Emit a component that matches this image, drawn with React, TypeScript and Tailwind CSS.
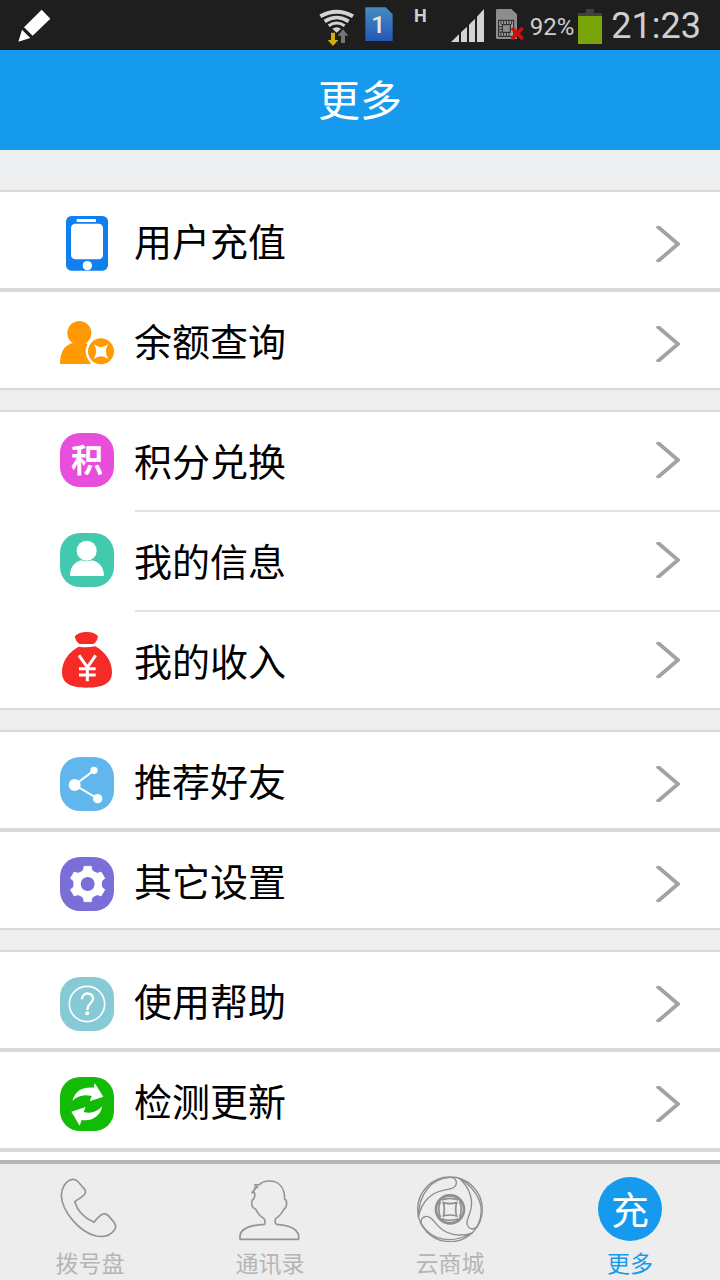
import React from 'react';

const chevron = (
  <svg viewBox="0 0 24 36" className="w-6 h-9 shrink-0" fill="none" aria-hidden="true">
    <path d="M1 0 L22 18 L1 36" stroke="#a3a3a3" strokeWidth="3.8" />
  </svg>
);

const iconClass = "w-[54px] h-[54px] shrink-0 overflow-visible";

function PhoneIcon() {
  return (
    <svg viewBox="60 111 162 162" className={iconClass} aria-hidden="true">
      <rect x="78" y="108" width="126" height="164" rx="16" fill="#0f80ee" />
      <rect x="93" y="131" width="96" height="107" rx="13" fill="#fff" />
      <rect x="110" y="117" width="58" height="9" rx="2" fill="#fff" />
      <circle cx="142" cy="257" r="14" fill="#fff" />
    </svg>
  );
}

function BalanceIcon() {
  return (
    <svg viewBox="60 411 162 162" className={iconClass} aria-hidden="true">
      <circle cx="118" cy="459" r="36" fill="#ff9a04" />
      <path d="M60 552 C60 515 74 495 98 489 Q118 498 138 490 L150 498 L152 552 Z" fill="#ff9a04" />
      <circle cx="183" cy="514" r="46" fill="#fff" />
      <circle cx="183" cy="514" r="39" fill="#ff9a04" />
      <path d="M161 492 Q183 511 205 492 Q190 514 205 537 Q183 520 161 537 Q176 514 161 492 Z" fill="#fff" />
    </svg>
  );
}

function PointsIcon() {
  return (
    <span className="w-[54px] h-[54px] shrink-0 rounded-[20px] bg-[#e84edb] text-white text-[32px] leading-none font-bold flex items-center justify-center pb-1">
      积
    </span>
  );
}

function ProfileIcon() {
  return (
    <svg viewBox="60 399 162 162" className={iconClass} aria-hidden="true">
      <rect x="60" y="399" width="162" height="162" rx="60" fill="#43c9ae" />
      <circle cx="140" cy="452" r="30" fill="#fff" />
      <path d="M90 528 C90 500 105 486 124 481 Q140 487 156 481 C176 486 192 500 192 528 Z" fill="#fff" />
    </svg>
  );
}

function IncomeIcon() {
  return (
    <svg viewBox="60 699 162 162" className={iconClass} aria-hidden="true">
      <path d="M104 709 C112 700 124 696 140 696 C156 696 168 700 174 709 C172 722 166 729 160 732 L118 732 C112 728 107 722 104 709 Z" fill="#f52b27" />
      <path d="M116 740 Q140 744 166 739 C196 756 216 784 216 816 C216 850 190 863 140 863 C92 863 66 850 66 816 C66 784 86 756 116 740 Z" fill="#f52b27" />
      <path d="M117 766 L142 802 L167 766 M142 800 V844 M117 806 H167 M117 825 H167" fill="none" stroke="#fff" strokeWidth="9" />
    </svg>
  );
}

function ShareIcon() {
  return (
    <svg viewBox="60 111 162 162" className={iconClass} aria-hidden="true">
      <rect x="60" y="111" width="162" height="162" rx="60" fill="#62b6ee" />
      <path d="M162 151 L104 195 L173 236" fill="none" stroke="#fff" strokeWidth="6" />
      <circle cx="162" cy="151" r="11" fill="#fff" />
      <circle cx="104" cy="195" r="18" fill="#fff" />
      <circle cx="173" cy="236" r="14" fill="#fff" />
    </svg>
  );
}

function SettingsIcon() {
  const teeth = [0, 60, 120, 180, 240, 300];
  return (
    <svg viewBox="60 411 162 162" className={iconClass} aria-hidden="true">
      <rect x="60" y="411" width="162" height="162" rx="60" fill="#7a6fd8" />
      <circle cx="143" cy="492" r="42" fill="#fff" />
      {teeth.map((angle) => (
        <path key={angle} d="M122 458 L130 450 L132 439 H154 L156 450 L164 458 Z" fill="#fff" stroke="#fff" strokeWidth="2" transform={`rotate(${angle} 143 492)`} />
      ))}
      <circle cx="143" cy="492" r="21" fill="#7a6fd8" />
    </svg>
  );
}

function HelpIcon() {
  return (
    <svg viewBox="60 111 162 162" className={iconClass} aria-hidden="true">
      <rect x="60" y="111" width="162" height="162" rx="60" fill="#86cad6" />
      <circle cx="141" cy="192" r="53" fill="none" stroke="#fff" strokeWidth="5" />
      <path d="M126 178 C126 155 159 155 159 176 C159 190 142 190 142 210" fill="none" stroke="#fff" strokeWidth="7" />
      <circle cx="142" cy="220" r="6" fill="#fff" />
    </svg>
  );
}

function UpdateIcon() {
  return (
    <svg viewBox="60 411 162 162" className={iconClass} aria-hidden="true">
      <rect x="60" y="411" width="162" height="162" rx="60" fill="#12bb06" />
      <path d="M97 483 C106 450 130 440 161 443 L164 429 L190 470 L149 484 L155 468 C130 462 112 468 97 483 Z" fill="#fff" />
      <path d="M187 499 C180 532 152 545 125 540 L119 557 L94 515 L137 501 L131 516 C152 522 172 515 187 499 Z" fill="#fff" />
    </svg>
  );
}

const groups = [
  {
    id: 1,
    inset: false,
    rows: [
      { title: "用户充值", icon: <PhoneIcon /> },
      { title: "余额查询", icon: <BalanceIcon /> }
    ]
  },
  {
    id: 2,
    inset: true,
    rows: [
      { title: "积分兑换", icon: <PointsIcon /> },
      { title: "我的信息", icon: <ProfileIcon /> },
      { title: "我的收入", icon: <IncomeIcon /> }
    ]
  },
  {
    id: 3,
    inset: false,
    rows: [
      { title: "推荐好友", icon: <ShareIcon /> },
      { title: "其它设置", icon: <SettingsIcon /> }
    ]
  },
  {
    id: 4,
    inset: false,
    rows: [
      { title: "使用帮助", icon: <HelpIcon /> },
      { title: "检测更新", icon: <UpdateIcon /> }
    ]
  }
];

const tabIconClass = "w-[66px] h-[66px]";

const tabs = [
  {
    title: "拨号盘",
    active: false,
    icon: (
      <svg viewBox="171 108 198 198" className={tabIconClass} fill="none" stroke="#959595" strokeWidth="5" strokeLinejoin="round" aria-hidden="true">
        <path d="M214 119 C222 117 229 119 235 126 L254 148 C258 154 257 160 252 165 C244 173 233 178 224 185 C232 211 254 234 282 247 C289 238 298 228 307 223 C314 220 320 222 325 227 L343 248 C348 255 348 262 344 269 C332 286 310 292 288 288 C238 276 187 215 184 168 C184 145 195 125 214 119 Z" />
      </svg>
    )
  },
  {
    title: "通讯录",
    active: false,
    icon: (
      <svg viewBox="711 108 198 198" className={tabIconClass} fill="none" stroke="#959595" strokeWidth="5" strokeLinejoin="round" aria-hidden="true">
        <path d="M720 298 V286 C724 264 754 255 794 253 C796 246 795 240 792 236 C782 229 772 220 767 207 C756 206 753 190 757 180 L762 176 C765 168 766 163 763 158 L756 158 L765 148 L763 144 L773 142 L764 135 L778 134 C786 125 797 123 808 123 C838 123 854 144 854 178 C862 179 862 202 852 207 C846 219 838 229 827 236 C824 242 825 248 829 253 C866 255 890 264 896 286 V298 Z" />
      </svg>
    )
  },
  {
    title: "云商城",
    active: false,
    icon: (
      <svg viewBox="171 108 198 198" className={tabIconClass} fill="none" stroke="#8e8e8e" strokeWidth="4" aria-hidden="true">
        <circle cx="270" cy="208" r="97" />
        {[0, 120, 240].map((angle) => (
          <path key={angle} d="M175 232 C176 160 215 115 270 112 C286 111 292 124 288 134 C284 146 268 148 250 151 C214 157 184 186 175 232 Z" transform={`rotate(${angle} 270 208)`} />
        ))}
        <circle cx="270" cy="208" r="42" strokeWidth="8" />
        <path d="M250 188 Q270 194 290 188 Q284 208 290 228 Q270 222 250 228 Q256 208 250 188 Z" strokeWidth="5" />
        <path d="M245 180 Q270 170 295 180 M245 236 Q270 246 295 236 M241 184 Q232 208 241 232 M299 184 Q308 208 299 232" strokeWidth="5" />
      </svg>
    )
  },
  {
    title: "更多",
    active: true,
    icon: (
      <span className="w-16 h-16 rounded-full bg-[#169aed] text-white text-[38px] leading-none flex items-center justify-center pb-0.5">
        充
      </span>
    )
  }
];

function StatusBar() {
  return (
    <div className="h-[50px] shrink-0 bg-[#1e1e1e] text-[#cfcfcf] flex items-center pl-[18px] pr-[19px] font-['Roboto',sans-serif]">
      <svg viewBox="54 28 99 99" className="w-[33px] h-[33px]" fill="#fff" aria-hidden="true">
        <path d="M125 30 L151 57 L98 108 L72 83 Z M66 90 L91 115 L55 126 Z" />
      </svg>

      <div className="ml-auto h-full flex items-center">
        {/* Wi-Fi with traffic arrows */}
        <svg viewBox="54 0 105 150" className="w-[35px] h-[50px] mr-[11px]" aria-hidden="true">
          <g fill="none" stroke="#d3d3d3">
            <path d="M58 49 Q107 22 156 49" strokeWidth="12" />
            <path d="M71 64 Q107 41 143 64" strokeWidth="11" />
            <path d="M83 77 Q107 61 131 77" strokeWidth="9" />
          </g>
          <path d="M94 86 Q107 77 120 86 L107 98 Z" fill="#d3d3d3" />
          <path d="M90 98 H102 V120 H112 L96 138 L80 120 H90 Z" fill="#d5ad0a" />
          <path d="M120 129 H132 V107 H142 L126 88 L110 107 H120 Z" fill="#747474" />
        </svg>

        <svg viewBox="192 0 84 150" className="w-7 h-[50px] mr-[21px]" aria-hidden="true">
          <defs>
            <linearGradient id="sim" x1="0" y1="0" x2="0" y2="1">
              <stop offset="0" stopColor="#458cc0" />
              <stop offset="1" stopColor="#2557b8" />
            </linearGradient>
          </defs>
          <path d="M193 22 H254 L275 43 V123 H193 Z" fill="url(#sim)" />
          <text x="232" y="99" textAnchor="middle" fontSize="74" fontWeight="500" fill="#e8e8e8">1</text>
        </svg>

        <span className="self-start pt-1.5 text-lg leading-5 font-bold mr-6">H</span>

        <svg viewBox="453 0 99 150" className="w-[33px] h-[50px] mr-3" fill="#d3d3d3" aria-hidden="true">
          <path d="M453 126 L477 103 V126 Z M483 97 L501 80 V126 H483 Z M507 74 L525 56 V126 H507 Z M531 50 L552 27 V126 H531 Z" />
        </svg>

        {/* Second SIM is missing */}
        <svg viewBox="588 0 84 150" className="w-7 h-[50px] mr-1.5" aria-hidden="true">
          <path d="M592 27 H634 L651 43 V117 H592 Q588 117 588 113 V31 Q588 27 592 27 Z" fill="#8d8d8d" />
          <rect x="596" y="61" width="45" height="48" fill="#a5a5a5" stroke="#222" strokeWidth="3" />
          <path d="M603 62 V74 M611 62 V74 M619 62 V74 M627 62 V74 M635 62 V74 M603 97 V109 M611 97 V109 M619 97 V109 M627 97 V109 M597 80 H606 M597 88 H606 M597 96 H606" stroke="#222" strokeWidth="3" />
          <rect x="607" y="74" width="24" height="23" fill="#8d8d8d" stroke="#222" strokeWidth="3" />
          <path d="M636 84 L668 117 M668 84 L636 117" stroke="#cc0f0f" strokeWidth="11" />
        </svg>

        <span className="text-2xl pt-1 mr-1">92%</span>

        <svg viewBox="834 0 72 150" className="w-6 h-[50px] mr-[9px]" aria-hidden="true">
          <path d="M858 27 H882 V39 H906 V50 H834 V39 H858 Z" fill="#414141" />
          <rect x="834" y="48" width="72" height="84" fill="#79a50a" />
        </svg>

        <span className="text-4xl pt-0.5">21:23</span>
      </div>
    </div>
  );
}

export default function App() {
  return (
    <div className="h-screen flex flex-col bg-[#eceef0] text-black font-['Noto_Sans_CJK_SC',sans-serif]">
      <StatusBar />

      <header className="h-[100px] shrink-0 bg-[#169aed] flex items-center justify-center">
        <h1 className="text-[42px] leading-none text-white pb-1">更多</h1>
      </header>

      <main className="flex-1 min-h-0 overflow-hidden flex flex-col pt-10">
        {groups.map((group) => (
          <ul
            key={group.id}
            className={`shrink-0 bg-white ${group.inset ? "border-y-2 border-[#d9dadb]" : ""} ${group.id < groups.length ? "mb-5" : ""}`}
          >
            {group.rows.map((row, i) => (
              <li
                key={row.title}
                className={group.inset ? "h-[100px] last:h-24" : "border-y-2 border-[#d9d9d9]"}
              >
                <button
                  type="button"
                  className={`w-full flex items-center gap-5 pl-[60px] text-left ${group.inset ? "h-24" : "h-24 pt-2"}`}
                >
                  {row.icon}
                  <span className={`flex-1 text-[38px] leading-none ${group.inset ? "" : "pb-2"}`}>{row.title}</span>
                  <span className="pr-10">{chevron}</span>
                </button>
                {group.inset && i < group.rows.length - 1 && (
                  <div className="ml-[135px] mt-0.5 h-0.5 bg-[#e3e3e3]"></div>
                )}
              </li>
            ))}
          </ul>
        ))}
        <div className="flex-1 bg-white border-t-2 border-[#d9d9d9]"></div>
      </main>

      <nav className="h-[120px] shrink-0 border-t-4 border-[#b5b5b5] bg-[#ededed] grid grid-cols-4">
        {tabs.map((tab) => (
          <button
            key={tab.title}
            type="button"
            className={`flex flex-col items-center pt-3 ${tab.active ? "text-[#169aed]" : "text-[#b5b5b5]"}`}
          >
            <span className="h-[66px] flex items-center justify-center">{tab.icon}</span>
            <span className="text-[23px] leading-6 pt-2">{tab.title}</span>
          </button>
        ))}
      </nav>
    </div>
  );
}
